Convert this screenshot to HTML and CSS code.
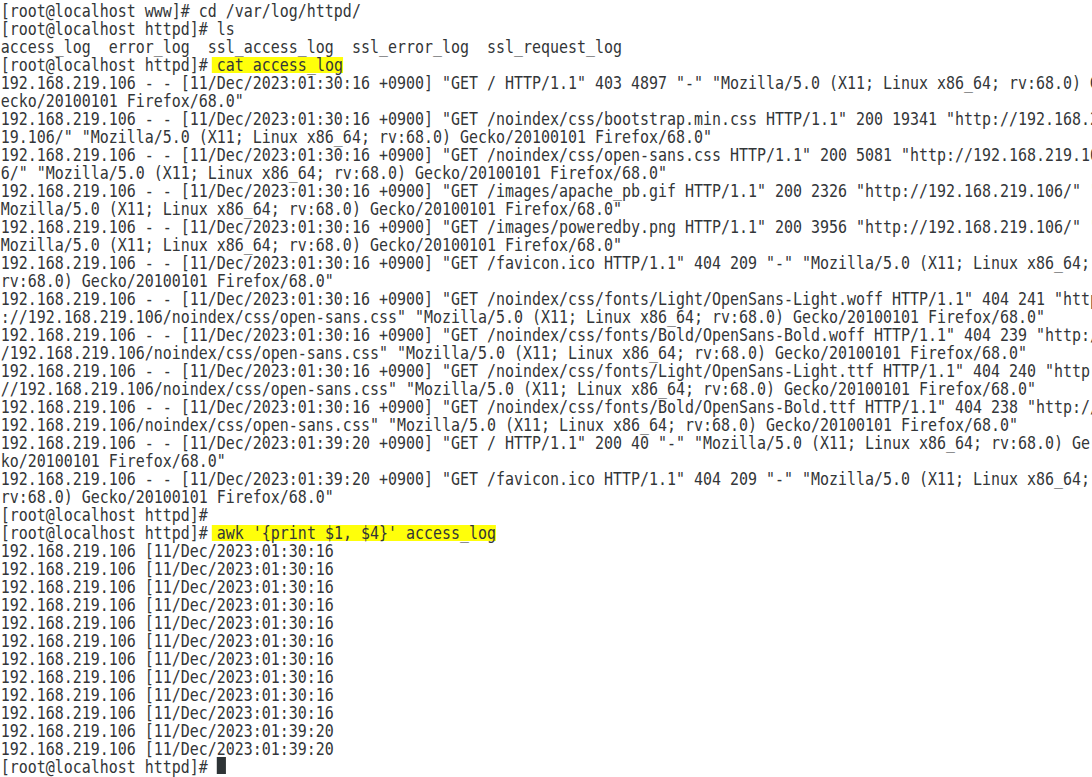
FILE: index.html
```html
<!DOCTYPE html>
<html>
<head>
<meta charset="utf-8">
<link rel="stylesheet" href="styles.css">
</head>
<body>
<div class="term">
<div class="row">[root@localhost www]# cd /var/log/httpd/</div>
<div class="row">[root@localhost httpd]# ls</div>
<div class="row">access_log  error_log  ssl_access_log  ssl_error_log  ssl_request_log</div>
<div class="row">[root@localhost httpd]# <span class="hl">cat access_log</span></div>
<div class="row">192.168.219.106 - - [11/Dec/2023:01:30:16 +0900] "GET / HTTP/1.1" 403 4897 "-" "Mozilla/5.0 (X11; Linux x86_64; rv:68.0) G</div>
<div class="row">ecko/20100101 Firefox/68.0"</div>
<div class="row">192.168.219.106 - - [11/Dec/2023:01:30:16 +0900] "GET /noindex/css/bootstrap.min.css HTTP/1.1" 200 19341 "http://192.168.2</div>
<div class="row">19.106/" "Mozilla/5.0 (X11; Linux x86_64; rv:68.0) Gecko/20100101 Firefox/68.0"</div>
<div class="row">192.168.219.106 - - [11/Dec/2023:01:30:16 +0900] "GET /noindex/css/open-sans.css HTTP/1.1" 200 5081 "http://192.168.219.10</div>
<div class="row">6/" "Mozilla/5.0 (X11; Linux x86_64; rv:68.0) Gecko/20100101 Firefox/68.0"</div>
<div class="row">192.168.219.106 - - [11/Dec/2023:01:30:16 +0900] "GET /images/apache_pb.gif HTTP/1.1" 200 2326 "http://192.168.219.106/" "</div>
<div class="row">Mozilla/5.0 (X11; Linux x86_64; rv:68.0) Gecko/20100101 Firefox/68.0"</div>
<div class="row">192.168.219.106 - - [11/Dec/2023:01:30:16 +0900] "GET /images/poweredby.png HTTP/1.1" 200 3956 "http://192.168.219.106/" "</div>
<div class="row">Mozilla/5.0 (X11; Linux x86_64; rv:68.0) Gecko/20100101 Firefox/68.0"</div>
<div class="row">192.168.219.106 - - [11/Dec/2023:01:30:16 +0900] "GET /favicon.ico HTTP/1.1" 404 209 "-" "Mozilla/5.0 (X11; Linux x86_64; </div>
<div class="row">rv:68.0) Gecko/20100101 Firefox/68.0"</div>
<div class="row">192.168.219.106 - - [11/Dec/2023:01:30:16 +0900] "GET /noindex/css/fonts/Light/OpenSans-Light.woff HTTP/1.1" 404 241 "http</div>
<div class="row">://192.168.219.106/noindex/css/open-sans.css" "Mozilla/5.0 (X11; Linux x86_64; rv:68.0) Gecko/20100101 Firefox/68.0"</div>
<div class="row">192.168.219.106 - - [11/Dec/2023:01:30:16 +0900] "GET /noindex/css/fonts/Bold/OpenSans-Bold.woff HTTP/1.1" 404 239 "http:/</div>
<div class="row">/192.168.219.106/noindex/css/open-sans.css" "Mozilla/5.0 (X11; Linux x86_64; rv:68.0) Gecko/20100101 Firefox/68.0"</div>
<div class="row">192.168.219.106 - - [11/Dec/2023:01:30:16 +0900] "GET /noindex/css/fonts/Light/OpenSans-Light.ttf HTTP/1.1" 404 240 "http:</div>
<div class="row">//192.168.219.106/noindex/css/open-sans.css" "Mozilla/5.0 (X11; Linux x86_64; rv:68.0) Gecko/20100101 Firefox/68.0"</div>
<div class="row">192.168.219.106 - - [11/Dec/2023:01:30:16 +0900] "GET /noindex/css/fonts/Bold/OpenSans-Bold.ttf HTTP/1.1" 404 238 "http://</div>
<div class="row">192.168.219.106/noindex/css/open-sans.css" "Mozilla/5.0 (X11; Linux x86_64; rv:68.0) Gecko/20100101 Firefox/68.0"</div>
<div class="row">192.168.219.106 - - [11/Dec/2023:01:39:20 +0900] "GET / HTTP/1.1" 200 40 "-" "Mozilla/5.0 (X11; Linux x86_64; rv:68.0) Ge</div>
<div class="row">ko/20100101 Firefox/68.0"</div>
<div class="row">192.168.219.106 - - [11/Dec/2023:01:39:20 +0900] "GET /favicon.ico HTTP/1.1" 404 209 "-" "Mozilla/5.0 (X11; Linux x86_64; </div>
<div class="row">rv:68.0) Gecko/20100101 Firefox/68.0"</div>
<div class="row">[root@localhost httpd]# </div>
<div class="row">[root@localhost httpd]# <span class="hl">awk '{print $1, $4}' access_log</span></div>
<div class="row">192.168.219.106 [11/Dec/2023:01:30:16</div>
<div class="row">192.168.219.106 [11/Dec/2023:01:30:16</div>
<div class="row">192.168.219.106 [11/Dec/2023:01:30:16</div>
<div class="row">192.168.219.106 [11/Dec/2023:01:30:16</div>
<div class="row">192.168.219.106 [11/Dec/2023:01:30:16</div>
<div class="row">192.168.219.106 [11/Dec/2023:01:30:16</div>
<div class="row">192.168.219.106 [11/Dec/2023:01:30:16</div>
<div class="row">192.168.219.106 [11/Dec/2023:01:30:16</div>
<div class="row">192.168.219.106 [11/Dec/2023:01:30:16</div>
<div class="row">192.168.219.106 [11/Dec/2023:01:30:16</div>
<div class="row">192.168.219.106 [11/Dec/2023:01:39:20</div>
<div class="row">192.168.219.106 [11/Dec/2023:01:39:20</div>
<div class="row">[root@localhost httpd]# <span class="cursor"></span></div>
</div>
</body>
</html>
```
FILE: styles.css
```css
html, body {
  margin: 0;
  padding: 0;
}
html {
  background: #ffffff;
}
body {
  width: 1092px;
  height: 777px;
  overflow: hidden;
}
.term {
  position: relative;
  z-index: 0;
  display: flex;
  flex-direction: column;
  width: 1320px;
  padding-top: 2px;
  padding-left: 1px;
  font-family: "DejaVu Sans Mono", monospace;
  font-size: 18px;
  line-height: 18px;
  color: #333638;
  transform: scaleX(0.8306);
  transform-origin: 0 0;
}
.row {
  height: 18px;
  white-space: pre;
}
.hl {
  position: relative;
}
.hl::before {
  content: "";
  position: absolute;
  left: -6px;
  right: 0;
  top: 2.5px;
  height: 16px;
  background: #ffff0a;
  z-index: -1;
}
.cursor {
  display: inline-block;
  width: 10.8px;
  height: 17px;
  margin-top: -1px;
  vertical-align: top;
  background: #2e3436;
}
```
